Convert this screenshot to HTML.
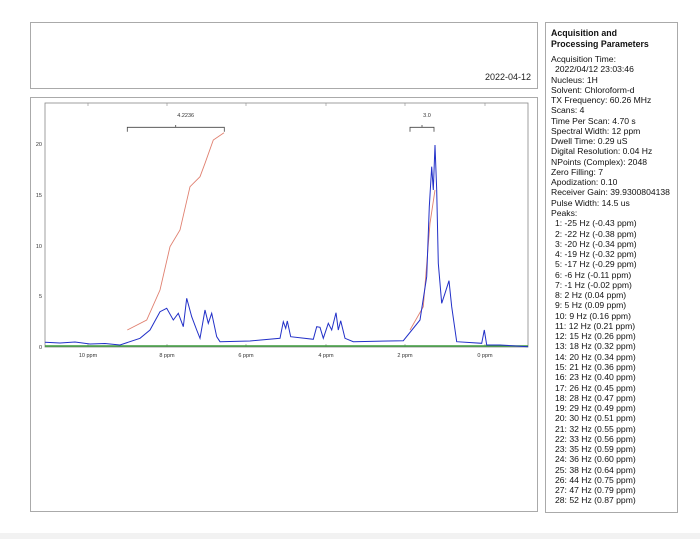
<!DOCTYPE html>
<html><head><meta charset="utf-8"><style>
body{margin:0;width:700px;height:539px;background:#fff;overflow:hidden;position:relative;font-family:"Liberation Sans",sans-serif;}
.box{position:absolute;border:1px solid #aaa;box-sizing:border-box;}
#panel{left:545px;top:22px;width:133px;height:491px;font-size:8.6px;color:#111;line-height:10.26px;padding:5px 0 0 5px;}
#panel b{display:block;font-size:8.8px;line-height:10.5px;margin-bottom:5px;}
.i{padding-left:4px}
</style></head><body>
<div class="box" style="left:30px;top:22px;width:508px;height:67px;"><div style="position:absolute;right:6px;top:49px;font-size:9px;color:#222">2022-04-12</div></div>
<div class="box" style="left:30px;top:97px;width:508px;height:415px;"></div>
<svg style="position:absolute;left:0;top:0" width="700" height="539" font-family="Liberation Sans, sans-serif" font-size="5.5" fill="#333">
<rect x="45" y="103" width="483" height="244" fill="none" stroke="#888" stroke-width="0.8"/>
<g stroke="#888" stroke-width="0.6">
<line x1="88" y1="347" x2="88" y2="344"/><line x1="167" y1="347" x2="167" y2="344"/><line x1="246" y1="347" x2="246" y2="344"/><line x1="326" y1="347" x2="326" y2="344"/><line x1="405" y1="347" x2="405" y2="344"/><line x1="485" y1="347" x2="485" y2="344"/>
<line x1="88" y1="103" x2="88" y2="106"/><line x1="167" y1="103" x2="167" y2="106"/><line x1="246" y1="103" x2="246" y2="106"/><line x1="326" y1="103" x2="326" y2="106"/><line x1="405" y1="103" x2="405" y2="106"/><line x1="485" y1="103" x2="485" y2="106"/>
</g>
<g text-anchor="end"><text x="42" y="146">20</text><text x="42" y="197">15</text><text x="42" y="248">10</text><text x="42" y="298">5</text><text x="42" y="349">0</text></g>
<g text-anchor="middle"><text x="88" y="357">10 ppm</text><text x="167" y="357">8 ppm</text><text x="246" y="357">6 ppm</text><text x="326" y="357">4 ppm</text><text x="405" y="357">2 ppm</text><text x="485" y="357">0 ppm</text>
<text x="185.7" y="117">4.2236</text><text x="427" y="117">3.0</text></g>
<path d="M127.3 131.7V127.3H224.3V131.7M175.7 127.3V125M410 131.7V127.3H434V131.7M422 127.3V125" fill="none" stroke="#444" stroke-width="0.8"/>
<line x1="45" y1="346" x2="528" y2="346" stroke="#3a9a3a" stroke-width="1.5"/>
<path d="M127.3 330L146.7 320L160 290L170 246.7L180 230L190 186.7L200 176.7L205 163.3L213.3 140L224 132.7" fill="none" stroke="#e08070" stroke-width="0.9"/>
<path d="M410 330L423.3 306.7L430 223.3L435 190" fill="none" stroke="#e08070" stroke-width="0.9"/>
<path d="M45 342.3L60 343L75 342L90 344L105 343.5L120 345L140 338.3L150 330L160 311.7L166.7 308.3L173.3 320L178.3 313.3L183.3 326.7L186.7 298.3L191.7 316.7L196.7 330L200 338.3L205 310L208.3 323.3L211.7 313.3L216.7 336.7L220 341.7L250 341L280 338.3L283.3 321.7L285.7 328.3L287.3 321L290.7 336.7L313.3 339.3L316.7 326.7L320 327.3L323.3 338.3L328.3 323.3L331.7 330L336 312.7L338.3 330L340.7 320.7L345 338.3L353.3 341.7L403.3 340.7L420 320L426.7 276.7L429.3 206.7L431.7 166.7L433.3 190L435 145L436.7 190L438.3 263.3L441.7 303.3L445 293.3L449 280.7L451.7 306.7L456.7 341.7L481.7 343.3L484.3 330L486.7 345L500 345L528 346.7" fill="none" stroke="#2230c8" stroke-width="1"/>
</svg>
<div class="box" id="panel"><b>Acquisition and<br>Processing Parameters</b>
Acquisition Time:<br><span class="i">2022/04/12 23:03:46</span><br>Nucleus: 1H<br>Solvent: Chloroform-d<br>TX Frequency: 60.26 MHz<br>Scans: 4<br>Time Per Scan: 4.70 s<br>Spectral Width: 12 ppm<br>Dwell Time: 0.29 uS<br>Digital Resolution: 0.04 Hz<br>NPoints (Complex): 2048<br>Zero Filling: 7<br>Apodization: 0.10<br>Receiver Gain: 39.9300804138<br>Pulse Width: 14.5 us<br>Peaks:<br>
<div class="i">1: -25 Hz (-0.43 ppm)<br>2: -22 Hz (-0.38 ppm)<br>3: -20 Hz (-0.34 ppm)<br>4: -19 Hz (-0.32 ppm)<br>5: -17 Hz (-0.29 ppm)<br>6: -6 Hz (-0.11 ppm)<br>7: -1 Hz (-0.02 ppm)<br>8: 2 Hz (0.04 ppm)<br>9: 5 Hz (0.09 ppm)<br>10: 9 Hz (0.16 ppm)<br>11: 12 Hz (0.21 ppm)<br>12: 15 Hz (0.26 ppm)<br>13: 18 Hz (0.32 ppm)<br>14: 20 Hz (0.34 ppm)<br>15: 21 Hz (0.36 ppm)<br>16: 23 Hz (0.40 ppm)<br>17: 26 Hz (0.45 ppm)<br>18: 28 Hz (0.47 ppm)<br>19: 29 Hz (0.49 ppm)<br>20: 30 Hz (0.51 ppm)<br>21: 32 Hz (0.55 ppm)<br>22: 33 Hz (0.56 ppm)<br>23: 35 Hz (0.59 ppm)<br>24: 36 Hz (0.60 ppm)<br>25: 38 Hz (0.64 ppm)<br>26: 44 Hz (0.75 ppm)<br>27: 47 Hz (0.79 ppm)<br>28: 52 Hz (0.87 ppm)</div>
</div>
<div style="position:absolute;left:0;top:533px;width:700px;height:6px;background:#f2f2f2"></div>
</body></html>
